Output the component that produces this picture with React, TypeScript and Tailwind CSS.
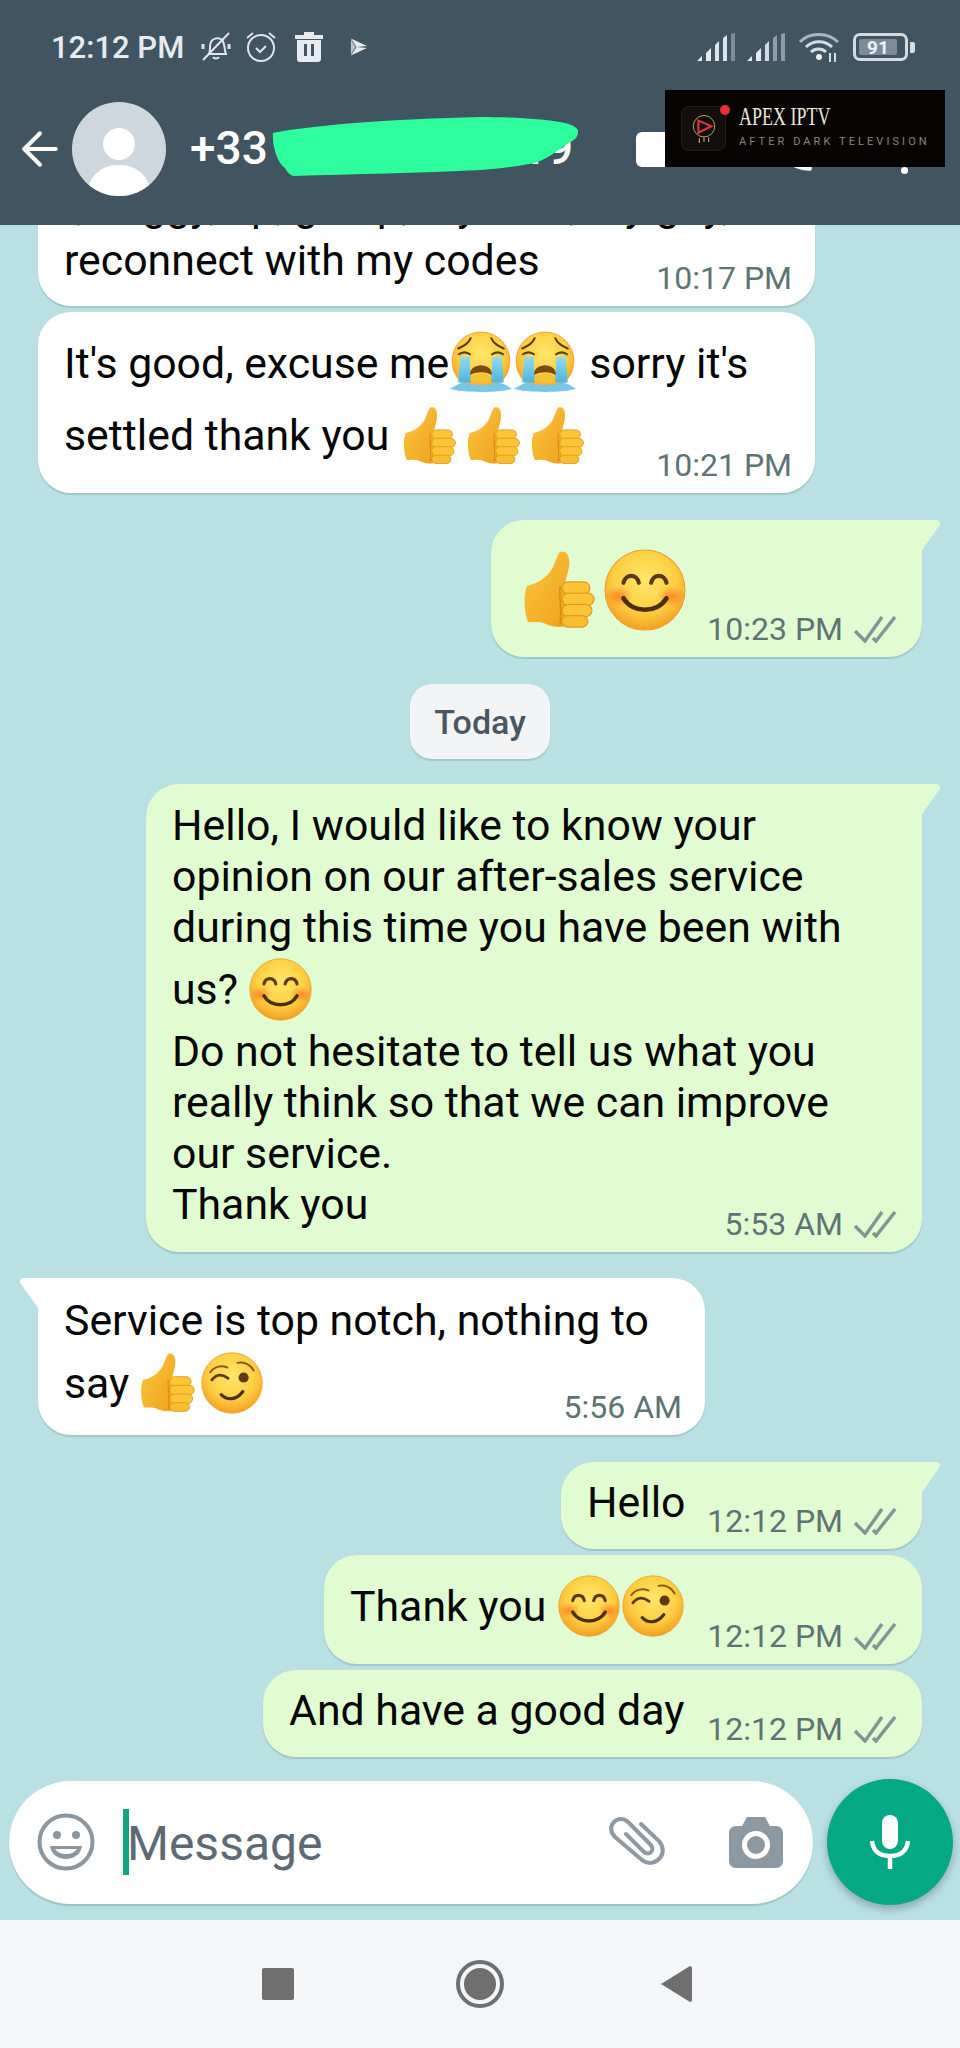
import React from "react";
import { ArrowLeft } from "lucide-react";

function GradientDefs() {
  return (
    <svg className="absolute h-0 w-0" aria-hidden="true">
      <defs>
        <radialGradient id="faceFill" cx="50%" cy="38%" r="62%">
          <stop offset="0%" stopColor="#ffe76a" />
          <stop offset="62%" stopColor="#fdcf42" />
          <stop offset="100%" stopColor="#f3a024" />
        </radialGradient>
        <radialGradient id="blushFill">
          <stop offset="0%" stopColor="#ff6a1f" stopOpacity="0.7" />
          <stop offset="100%" stopColor="#ff6a1f" stopOpacity="0" />
        </radialGradient>
        <linearGradient id="thumbFill" x1="0" y1="0" x2="1" y2="1">
          <stop offset="0%" stopColor="#fcc63d" />
          <stop offset="100%" stopColor="#f0a11e" />
        </linearGradient>
        <linearGradient id="tearFill" x1="0" y1="0" x2="0" y2="1">
          <stop offset="0%" stopColor="#8fdcf0" />
          <stop offset="100%" stopColor="#4fb2de" />
        </linearGradient>
      </defs>
    </svg>
  );
}

function Thumb({ className = "h-[58px] w-[55px]" }: { className?: string }) {
  return (
    <svg viewBox="0 0 70 76" className={className}>
      <path
        d="M4 34 C14 32 24 26 29 16 C32 10 33 4 36 1 C41 -1 45 3 45 11 C45 19 42 25 41 31 L44 72 C36 76 26 73 20 70 C15 68 10 70 5 69 C1 60 0 42 4 34 Z"
        fill="url(#thumbFill)"
      />
      <path d="M36 34 C35 46 38 60 36 72" stroke="#d98c14" strokeWidth="1.4" fill="none" />
      <rect x="38" y="30" width="27" height="12" rx="6" fill="#fbc537" stroke="#e39a1b" strokeWidth="1.2" />
      <rect x="38" y="41" width="31" height="12" rx="6" fill="#fbc537" stroke="#e39a1b" strokeWidth="1.2" />
      <rect x="38" y="52" width="29" height="12" rx="6" fill="#fbc537" stroke="#e39a1b" strokeWidth="1.2" />
      <rect x="38" y="63" width="25" height="11" rx="5.5" fill="#f8bd30" stroke="#e39a1b" strokeWidth="1.2" />
    </svg>
  );
}

function Smile({ className = "h-[62px] w-[62px]" }: { className?: string }) {
  return (
    <svg viewBox="0 0 80 80" className={className}>
      <circle cx="40" cy="40" r="39" fill="url(#faceFill)" stroke="#ee9b2a" strokeWidth="1" />
      <ellipse cx="14" cy="46" rx="14" ry="10" fill="url(#blushFill)" />
      <ellipse cx="66" cy="46" rx="14" ry="10" fill="url(#blushFill)" />
      <path d="M19 33 C21 24 32 24 34 33" stroke="#5a3a12" strokeWidth="4" fill="none" strokeLinecap="round" />
      <path d="M46 33 C48 24 59 24 61 33" stroke="#5a3a12" strokeWidth="4" fill="none" strokeLinecap="round" />
      <path d="M19 48 C28 63 52 63 61 48" stroke="#4a3010" strokeWidth="4.5" fill="none" strokeLinecap="round" />
    </svg>
  );
}

function Wink({ className = "h-[62px] w-[62px]" }: { className?: string }) {
  return (
    <svg viewBox="0 0 80 80" className={className}>
      <circle cx="40" cy="40" r="39" fill="url(#faceFill)" stroke="#ee9b2a" strokeWidth="1" />
      <path d="M12 26 C18 18 27 17 34 20" stroke="#8a5a14" strokeWidth="2.500" fill="none" strokeLinecap="round" />
      <path d="M47 14 C55 12 64 16 68 24" stroke="#8a5a14" strokeWidth="2.500" fill="none" strokeLinecap="round" />
      <path d="M14 36 C20 28 28 28 35 34" stroke="#5a3a12" strokeWidth="3.500" fill="none" strokeLinecap="round" />
      <circle cx="55" cy="33" r="6.500" fill="#5a3a12" />
      <path d="M26 55 C34 63 46 62 54 51" stroke="#4a3010" strokeWidth="4" fill="none" strokeLinecap="round" />
    </svg>
  );
}

function Crying({ className = "h-[64px] w-[64px]" }: { className?: string }) {
  return (
    <svg viewBox="0 0 62 62" className={className}>
      <circle cx="31" cy="29" r="28" fill="url(#faceFill)" stroke="#ee9b2a" strokeWidth="0.8" />
      <path d="M9 17 C14 15 19 12 21 7" stroke="#5a3a12" strokeWidth="2" fill="none" strokeLinecap="round" />
      <path d="M53 17 C48 15 43 12 41 7" stroke="#5a3a12" strokeWidth="2" fill="none" strokeLinecap="round" />
      <path d="M9 23 C13 20 17 20 21 23" stroke="#5a3a12" strokeWidth="2" fill="none" />
      <path d="M41 23 C45 20 49 20 53 23" stroke="#5a3a12" strokeWidth="2" fill="none" />
      <path d="M20 43 C20 30 42 30 42 43 C36 39 26 39 20 43 Z" fill="#7a4a12" />
      <path d="M21 44 C27 41 35 41 41 44 C40 52 22 52 21 44 Z" fill="#f6c42f" />
      <path d="M11 25 H20 L21 50 H9 Z" fill="url(#tearFill)" />
      <path d="M42 25 H51 L53 50 H41 Z" fill="url(#tearFill)" />
      <path d="M1 56 C8 52 12 50 15 50 C22 53 40 53 47 50 C51 50 56 53 61 56 C50 60 12 60 1 56 Z" fill="#76c8e6" />
    </svg>
  );
}

function Ticks() {
  return (
    <svg viewBox="0 0 43 27" className="h-[27px] w-[43px]">
      <path d="M1 15 L11 25 L28 1" stroke="#7f9694" strokeWidth="3.400" fill="none" />
      <path d="M19 22 L22 25 L41 1" stroke="#7f9694" strokeWidth="3.400" fill="none" />
    </svg>
  );
}

// time and ticks sit over the bubble's bottom right corner
function Meta({ time, read = true }: { time: string; read?: boolean }) {
  return (
    <div
      className={`absolute bottom-[12px] flex h-[31px] items-center whitespace-nowrap text-[32px] leading-[31px] text-[#5e7474] ${
        read ? "right-[25px]" : "right-[23px]"
      }`}
    >
      <span>{time}</span>
      {read && (
        <span className="ml-[11px] flex">
          <Ticks />
        </span>
      )}
    </div>
  );
}

function Tail({ side }: { side: "left" | "right" }) {
  if (side === "right") {
    return (
      <svg viewBox="0 0 20 32" className="absolute right-[-19px] top-0 h-[32px] w-[20px]">
        <path d="M0 0 H15 C19 0 20 3 18 6 L1 30 V32 H0 Z" fill="#e1fcd1" />
      </svg>
    );
  }
  return (
    <svg viewBox="0 0 20 32" className="absolute left-[-19px] top-0 h-[32px] w-[20px]">
      <path d="M20 0 H5 C1 0 0 3 2 6 L19 30 V32 H20 Z" fill="#ffffff" />
    </svg>
  );
}

const sentBubble =
  "relative mr-[38px] shrink-0 self-end whitespace-nowrap bg-[#e1fcd1] pl-[26px] shadow-[0_2px_1px_rgba(60,110,110,0.22)]";
const receivedBubble =
  "relative ml-[38px] shrink-0 self-start whitespace-nowrap bg-white pl-[26px] shadow-[0_2px_1px_rgba(60,110,110,0.22)]";

function StatusBar() {
  return (
    <div className="flex h-[94px] items-center justify-between pl-[51px] pr-[45px] text-[#e6ebef]">
      <div className="flex items-center">
        <span className="text-[31px] font-medium leading-none">12:12 PM</span>
        {/* bell off */}
        <svg viewBox="0 0 32 32" className="ml-[16px] h-[32px] w-[32px]" fill="none" stroke="#dfe5ea" strokeWidth="2">
          <path d="M9 23 C11 19 9 15 11 11 C13 7 19 6 22 9 C25 12 24 18 26 23 Z" />
          <path d="M13 26 C14 28 18 28 19 26 M3 29 L29 2" />
          <path d="M3 13 V18 M29 13 V18" strokeWidth="3" />
        </svg>
        {/* alarm */}
        <svg viewBox="0 0 32 32" className="ml-[13px] h-[32px] w-[32px]" fill="none" stroke="#dfe5ea" strokeWidth="2">
          <circle cx="16" cy="17" r="13" />
          <path d="M11 17 L15 21 L21 15 M2 7 L8 2 M30 7 L24 2" />
        </svg>
        {/* trash */}
        <svg viewBox="0 0 30 32" className="ml-[17px] h-[32px] w-[30px]" fill="#e6ebef">
          <path d="M10 1 H20 V4 H29 V8 H1 V4 H10 Z" />
          <path fillRule="evenodd" d="M3 9 H27 V28 C27 30 26 31 24 31 H6 C4 31 3 30 3 28 Z M10 13 V25 H13 V13 Z M17 13 V25 H20 V13 Z" />
        </svg>
        {/* play store */}
        <svg viewBox="0 0 20 20" className="ml-[25px] h-[20px] w-[19px]" fill="#e6ebef">
          <path d="M2 1 L19 9 L8 10 Z" />
          <path d="M2 19 L19 11 L8 10 Z" />
          <path d="M2 2 L7 10 L2 18 Z" fill="#b9c3ca" />
        </svg>
      </div>
      <div className="flex items-center">
        <svg viewBox="0 0 38 28" className="h-[28px] w-[38px]">
          <path d="M0 28 L5 23 V28 Z M9 28 V20 L14 15 V28 Z" fill="#e6ebef" />
          <path d="M18 28 V12 L22 8 V28 Z M26 28 V5 L30 2 V28 Z" fill="#dfe5ea" />
          <path d="M34 28 V1 L38 0 V28 Z" fill="#7f8f9a" />
        </svg>
        <svg viewBox="0 0 38 28" className="ml-[12px] h-[28px] w-[38px]">
          <path d="M0 28 L5 23 V28 Z M9 28 V20 L14 15 V28 Z" fill="#e6ebef" />
          <path d="M18 28 V12 L22 8 V28 Z" fill="#d2dae0" />
          <path d="M26 28 V5 L30 2 V28 Z M34 28 V1 L38 0 V28 Z" fill="#8e9da7" />
        </svg>
        <svg viewBox="0 0 40 32" className="ml-[14px] h-[32px] w-[40px]" fill="none" stroke="#d6dde2">
          <path d="M1 11 C10 1 29 1 39 11" strokeWidth="3" stroke="#aab6be" />
          <path d="M7 16 C14 9 26 9 33 16" strokeWidth="3" />
          <path d="M12 21 C16 17 23 17 27 21" strokeWidth="3" />
          <circle cx="20" cy="26" r="3" fill="#f0f3f5" stroke="none" />
          <path d="M31 22 V31 M36 22 V31" strokeWidth="2" />
        </svg>
        <div className="relative ml-[14px] flex h-[28px] w-[55px] items-center rounded-[7px] border-[3px] border-[#d5dce1] p-[3px]">
          <div className="flex h-full w-[38px] items-center justify-center rounded-[2px] bg-[#7b8b97] text-[19px] font-bold leading-none text-[#eef1f3]">
            91
          </div>
        </div>
        <div className="ml-[2px] h-[11px] w-[5px] rounded-r-[2px] bg-[#d5dce1]" />
      </div>
    </div>
  );
}

function Toolbar() {
  return (
    <div className="flex h-[110px] items-center pl-[13px] text-white">
      <ArrowLeft size={54} strokeWidth={4} color="#ffffff" absoluteStrokeWidth />
      <div className="relative ml-[5px] h-[94px] w-[94px] shrink-0 overflow-hidden rounded-full bg-[#cfd7de]">
        <div className="absolute left-[31px] top-[26px] h-[32px] w-[32px] rounded-full bg-white" />
        <div className="absolute left-[15px] top-[63px] h-[60px] w-[64px] rounded-full bg-white" />
      </div>
      <span className="mb-[3px] ml-[24px] text-[46px] font-medium leading-none">+33</span>
      <span className="mb-[3px] ml-[253px] text-[46px] font-medium leading-none">19</span>
      <div className="ml-[63px] h-[35px] w-[60px] shrink-0 rounded-[6px] bg-white" />
      <svg viewBox="0 0 24 24" className="ml-[72px] mt-[5px] h-[50px] w-[50px] shrink-0" fill="#ffffff">
        <path d="M6.600 10.800c1.400 2.800 3.800 5.100 6.600 6.600l2.200-2.200c.3-.3.7-.4 1-.2 1.100.4 2.300.6 3.600.6.6 0 1 .4 1 1V20c0 .6-.4 1-1 1C10.600 21 3 13.400 3 4c0-.6.4-1 1-1h3.500c.6 0 1 .4 1 1 0 1.300.2 2.500.6 3.600.1.300 0 .7-.2 1z" />
      </svg>
      <div className="ml-[83px] mt-[16px] flex shrink-0 flex-col gap-[6px]">
        <div className="h-[7px] w-[7px] rounded-full bg-white" />
        <div className="h-[7px] w-[7px] rounded-full bg-white" />
        <div className="h-[7px] w-[7px] rounded-full bg-white" />
      </div>
    </div>
  );
}

function Header() {
  return (
    <div className="relative z-10 h-[225px] shrink-0 bg-[#415462]">
      <StatusBar />
      <Toolbar />
      {/* scribble over the phone number */}
      <svg viewBox="0 0 306 60" className="absolute left-[272px] top-[117px] h-[60px] w-[306px]" fill="#2dfd9c">
        <path d="M1 16 C40 8 120 2 208 0 C240 0 270 2 288 5 C300 7 307 11 306 15 C306 20 303 23 298 25 C285 34 275 42 263 46 C240 50 225 52 208 53 C150 56 80 57 22 59 C16 58 14 52 12 50 C6 46 0 30 1 16 Z" />
      </svg>
      {/* watermark */}
      <div className="absolute left-[665px] top-[90px] flex h-[77px] w-[280px] items-center bg-[#070302]">
        <div className="relative ml-[16px] flex h-[45px] w-[45px] shrink-0 items-center justify-center rounded-[8px] border border-[#211d1a] bg-[#12100f]">
          <svg viewBox="0 0 30 32" className="h-[34px] w-[28px]" fill="none">
            <circle cx="15" cy="13" r="11.500" stroke="#c9a56a" strokeWidth="1" />
            <path d="M9 7 L23 13 L9 20 Z" stroke="#e0353a" strokeWidth="2.200" />
            <path d="M10 26 V31 M15 25 V30 M20 25 V30" stroke="#c9a56a" strokeWidth="1.200" />
          </svg>
          <div className="absolute right-[-5px] top-[-2px] h-[10px] w-[10px] rounded-full bg-[#ec2c35]" />
        </div>
        <div className="ml-[13px] flex flex-col pb-[6px]">
          <span className="origin-left scale-x-[0.72] whitespace-nowrap font-['Liberation_Serif',serif] text-[25px] leading-[26px] text-[#ebe5da]">
            APEX IPTV
          </span>
          <span className="mt-[6px] whitespace-nowrap text-[11px] leading-[12px] tracking-[0.28em] text-[#8d847b]">
            AFTER DARK TELEVISION
          </span>
        </div>
      </div>
    </div>
  );
}

function Messages() {
  return (
    <div className="flex min-h-0 flex-1 flex-col justify-end overflow-hidden text-[42.800px] leading-[51px] text-[#060606]">
      <div className={`${receivedBubble} w-[777px] rounded-b-[33px]`}>
        <div className="pb-[20px]">
          <div className="pb-[4px]">I, buggy, up, go up, my own, my guy,</div>
          <div>reconnect with my codes</div>
        </div>
        <Meta time="10:17 PM" read={false} />
      </div>

      <div className={`${receivedBubble} mt-[6px] w-[777px] rounded-[33px]`}>
        <div className="pb-[21px] pt-[15px]">
          <div className="flex h-[72px] items-center">
            <span>It's good, excuse me</span>
            <Crying />
            <Crying />
            <span className="ml-[12px]">sorry it's</span>
          </div>
          <div className="flex h-[73px] items-center">
            <span>settled thank you</span>
            <span className="ml-[13px] flex gap-[9px]">
              <Thumb />
              <Thumb />
              <Thumb />
            </span>
          </div>
        </div>
        <Meta time="10:21 PM" read={false} />
      </div>

      <div className={`${sentBubble} mt-[27px] h-[137px] w-[431px] rounded-[33px] rounded-tr-none`}>
        <Tail side="right" />
        <div className="flex items-center gap-[9px] pl-[6px] pt-[29px]">
          <Thumb className="h-[80px] w-[72px]" />
          <Smile className="h-[82px] w-[82px]" />
        </div>
        <Meta time="10:23 PM" />
      </div>

      <div className="mt-[27px] flex h-[75px] w-[140px] shrink-0 items-center justify-center self-center rounded-[22px] bg-[#f2f4f6] text-[34px] font-medium leading-none text-[#4a5661] shadow-[0_2px_1px_rgba(60,110,110,0.22)]">
        Today
      </div>

      <div className={`${sentBubble} mt-[25px] w-[776px] rounded-[33px] rounded-tr-none`}>
        <Tail side="right" />
        <div className="pb-[22px] pt-[16px]">
          <div>Hello, I would like to know your</div>
          <div>opinion on our after-sales service</div>
          <div>during this time you have been with</div>
          <div className="flex h-[73px] items-center">
            <span>us?</span>
            <Smile className="ml-[11px] h-[63px] w-[63px]" />
          </div>
          <div>Do not hesitate to tell us what you</div>
          <div>really think so that we can improve</div>
          <div>our service.</div>
          <div>Thank you</div>
        </div>
        <Meta time="5:53 AM" />
      </div>

      <div className={`${receivedBubble} mt-[26px] w-[667px] rounded-[33px] rounded-tl-none`}>
        <Tail side="left" />
        <div className="pb-[15px] pt-[17px]">
          <div>Service is top notch, nothing to</div>
          <div className="flex h-[74px] items-center">
            <span>say</span>
            <Thumb className="ml-[11px] h-[60px] w-[55px]" />
            <Wink className="ml-[6px] h-[62px] w-[62px]" />
          </div>
        </div>
        <Meta time="5:56 AM" read={false} />
      </div>

      <div className={`${sentBubble} mt-[27px] h-[87px] w-[361px] rounded-[33px] rounded-tr-none`}>
        <Tail side="right" />
        <div className="pt-[15px]">Hello</div>
        <Meta time="12:12 PM" />
      </div>

      <div className={`${sentBubble} mt-[6px] h-[109px] w-[598px] rounded-[33px]`}>
        <div className="flex items-center pt-[20px]">
          <span>Thank you</span>
          <Smile className="ml-[12px] h-[62px] w-[62px]" />
          <Wink className="ml-[2px] h-[62px] w-[62px]" />
        </div>
        <Meta time="12:12 PM" />
      </div>

      <div className={`${sentBubble} mt-[6px] h-[87px] w-[659px] rounded-[33px]`}>
        <div className="pt-[15px]">And have a good day</div>
        <Meta time="12:12 PM" />
      </div>

      <div className="mb-[15px] mt-[22px] flex shrink-0 items-center pl-[9px]">
        <div className="flex h-[123px] w-[804px] items-center rounded-[62px] bg-white pl-[28px] shadow-[0_2px_1px_rgba(60,110,110,0.25)]">
          <svg viewBox="0 0 58 58" className="h-[58px] w-[58px]" fill="none" stroke="#8c969e" strokeWidth="4">
            <circle cx="29" cy="29" r="26.500" />
            <circle cx="20" cy="22" r="4" fill="#8c969e" stroke="none" />
            <circle cx="39" cy="22" r="4" fill="#8c969e" stroke="none" />
            <path d="M13 33 H45 C44 41 37 46 29 46 C21 46 14 41 13 33 Z" fill="#8c969e" stroke="none" />
            <path d="M18 36 H40 C38 39 34 41 29 41 C24 41 20 39 18 36 Z" fill="#ffffff" stroke="none" />
          </svg>
          <div className="ml-[28px] h-[66px] w-[6px] bg-[#12a381]" />
          <span className="ml-[-2px] mt-[3px] text-[48px] leading-none text-[#5d6973]">Message</span>
          <svg viewBox="0 0 56 50" className="ml-[287px] h-[50px] w-[56px]" fill="none" stroke="#8d99a3" strokeWidth="4" strokeLinecap="round">
            <path d="M32 7 L50 24 C55 30 55 37 50 42 C45 47 38 47 33 43 L6 20 C1 15 1 9 5 5 C9 1 15 1 19 5 L41 27 C44 30 44 33 42 35 C40 37 37 37 34 34 L17 17" />
          </svg>
          <svg viewBox="0 0 54 51" className="ml-[64px] h-[51px] w-[54px]">
            <path
              fillRule="evenodd"
              fill="#8c99a3"
              d="M18 0 H36 L41 9 H47 C51 9 54 12 54 16 V44 C54 48 51 51 47 51 H7 C3 51 0 48 0 44 V16 C0 12 3 9 7 9 H13 Z M27 14 A14 14 0 1 0 27 42 A14 14 0 1 0 27 14 Z M27 19 A9 9 0 1 1 27 37 A9 9 0 1 1 27 19 Z"
            />
          </svg>
        </div>
        <div className="ml-[14px] flex h-[126px] w-[126px] items-center justify-center rounded-full bg-[#05a884] shadow-[0_4px_8px_rgba(0,0,0,0.25)]">
          <svg viewBox="0 0 40 56" className="h-[56px] w-[40px]" fill="none" stroke="#ffffff" strokeWidth="4.500">
            <rect x="12" y="1" width="16" height="34" rx="8" fill="#ffffff" stroke="none" />
            <path d="M2 27 C3 38 11 42 20 42 C29 42 37 38 38 27 M20 42 V55" />
          </svg>
        </div>
      </div>
    </div>
  );
}

function NavBar() {
  return (
    <div className="flex h-[128px] shrink-0 items-center bg-[#f4f6f8] pl-[262px]">
      <div className="h-[32px] w-[32px] rounded-[2px] bg-[#6f6f6f]" />
      <div className="ml-[162px] flex h-[48px] w-[48px] items-center justify-center rounded-full border-[4px] border-[#6f6f6f]">
        <div className="h-[32px] w-[32px] rounded-full bg-[#6f6f6f]" />
      </div>
      <svg viewBox="0 0 31 36" className="ml-[157px] h-[36px] w-[31px]" fill="#6f6f6f">
        <path d="M0 18 L29 0 C30 0 31 1 31 2 V34 C31 35 30 36 29 36 Z" />
      </svg>
    </div>
  );
}

export default function App() {
  return (
    <div className="flex h-[2048px] w-[960px] flex-col overflow-hidden bg-[#b9e0e3] font-[Roboto,sans-serif]">
      <GradientDefs />
      <Header />
      <Messages />
      <NavBar />
    </div>
  );
}
